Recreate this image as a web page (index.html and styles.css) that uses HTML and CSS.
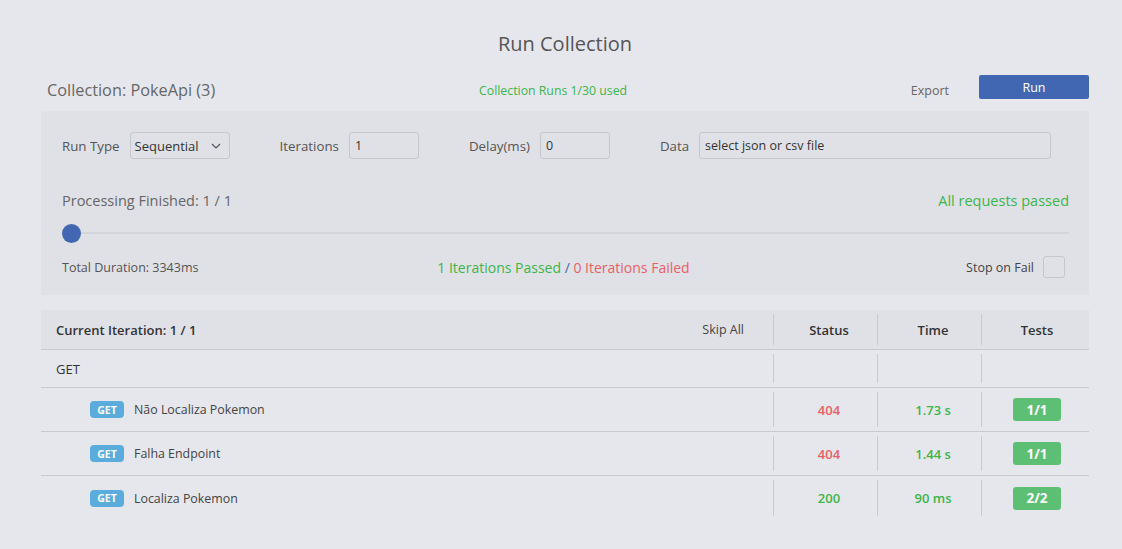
FILE: index.html
```html
<!DOCTYPE html>
<html lang="pt">
<head>
<meta charset="utf-8">
<title>Run Collection</title>
<link rel="stylesheet" href="styles.css">
</head>
<body>
<div class="page">
  <h1 class="title">Run Collection</h1>

  <div class="header">
    <div class="coll-name">Collection: PokeApi (3)</div>
    <div class="runs-used">Collection Runs 1/30 used</div>
    <div class="export">Export</div>
    <button class="run-btn">Run</button>
  </div>

  <div class="panel">
    <div class="controls">
      <span class="lbl">Run Type</span>
      <div class="select">
        <span>Sequential</span>
        <svg class="chev" width="10" height="6" viewBox="0 0 10 6"><path d="M1 1l4 4 4-4" fill="none" stroke="#555" stroke-width="1.2"/></svg>
      </div>
      <span class="lbl lbl-gap">Iterations</span>
      <input class="field small" type="text" value="1">
      <span class="lbl lbl-gap">Delay(ms)</span>
      <input class="field small" type="text" value="0">
      <span class="lbl lbl-gap">Data</span>
      <input class="field data" type="text" value="select json or csv file">
    </div>

    <div class="progress-row">
      <span class="processing">Processing Finished: 1 / 1</span>
      <span class="all-passed">All requests passed</span>
    </div>

    <div class="slider">
      <div class="thumb"></div>
    </div>

    <div class="summary-row">
      <span class="duration">Total Duration: 3343ms</span>
      <span class="iter-summary"><span class="green">1 Iterations Passed</span> <span class="slash">/</span> <span class="red">0 Iterations Failed</span></span>
      <span class="stop">Stop on Fail <span class="checkbox"></span></span>
    </div>
  </div>

  <div class="table">
    <div class="row head">
      <div class="cell first"><span class="bold">Current Iteration: 1 / 1</span><span class="skip">Skip All</span></div>
      <div class="cell col">Status</div>
      <div class="cell col">Time</div>
      <div class="cell col tests">Tests</div>
    </div>
    <div class="row group">
      <div class="cell first">GET</div>
      <div class="cell col"></div>
      <div class="cell col"></div>
      <div class="cell col tests"></div>
    </div>
    <div class="row req">
      <div class="cell first req-name"><span class="badge-get">GET</span>Não Localiza Pokemon</div>
      <div class="cell col red">404</div>
      <div class="cell col green">1.73 s</div>
      <div class="cell col tests"><span class="badge-test">1/1</span></div>
    </div>
    <div class="row req">
      <div class="cell first req-name"><span class="badge-get">GET</span>Falha Endpoint</div>
      <div class="cell col red">404</div>
      <div class="cell col green">1.44 s</div>
      <div class="cell col tests"><span class="badge-test">1/1</span></div>
    </div>
    <div class="row req last">
      <div class="cell first req-name"><span class="badge-get">GET</span>Localiza Pokemon</div>
      <div class="cell col green">200</div>
      <div class="cell col green">90 ms</div>
      <div class="cell col tests"><span class="badge-test">2/2</span></div>
    </div>
  </div>
</div>
</body>
</html>
```
FILE: styles.css
```css
* { box-sizing: border-box; }

body {
  margin: 0;
  background: #e6e7ec;
  font-family: "Open Sans", "Noto Sans", sans-serif;
  color: #444;
}

.page {
  width: 1048px;
  margin-left: 41px;
}

.title {
  margin: 0;
  padding-top: 30px;
  height: 75px;
  text-align: center;
  font-weight: 400;
  font-size: 20px;
  color: #555;
}

.header {
  display: flex;
  align-items: center;
  height: 30px;
  margin-bottom: 6px;
  padding-left: 6px;
}

.coll-name {
  width: 432px;
  font-size: 16.3px;
  color: #666;
}

.runs-used {
  font-size: 12.3px;
  color: #3db54a;
}

.export {
  margin-left: auto;
  font-size: 12.5px;
  color: #666;
  margin-right: 30px;
}

.run-btn {
  align-self: flex-start;
  width: 110px;
  height: 24px;
  border: none;
  border-radius: 2px;
  background: #4267b2;
  color: #fff;
  font-family: inherit;
  font-size: 12.5px;
  padding: 0;
}

.panel {
  background: #e0e1e6;
  padding: 21px 20px 0 21px;
  height: 184px;
}

.controls {
  display: flex;
  align-items: center;
  height: 27px;
}

.lbl {
  font-size: 13.3px;
  color: #555;
  margin-right: 10px;
}

.lbl-gap { margin-left: 50px; }

.select {
  width: 100px;
  height: 27px;
  border: 1px solid #c6c7cc;
  border-radius: 3px;
  display: flex;
  align-items: center;
  justify-content: space-between;
  padding: 0 8px 0 4px;
  font-size: 13px;
  color: #333;
}

.field {
  height: 27px;
  border: 1px solid #c6c7cc;
  border-radius: 3px;
  background: transparent;
  font-family: inherit;
  font-size: 12.5px;
  color: #333;
  padding: 0 5px;
  outline: none;
}

.field.small { width: 70px; }
.field.data { width: 352px; }

.progress-row {
  display: flex;
  justify-content: space-between;
  align-items: center;
  margin-top: 28px;
  height: 26px;
  font-size: 14.5px;
}

.processing { color: #666; }
.all-passed { color: #3db54a; }

.slider {
  margin-top: 19px;
  height: 2px;
  background: #d4d5da;
  display: flex;
  align-items: center;
}

.thumb {
  width: 19px;
  height: 19px;
  border-radius: 50%;
  background: #4267b2;
  flex: none;
}

.summary-row {
  display: flex;
  justify-content: space-between;
  align-items: center;
  margin-top: 21px;
  height: 24px;
  padding-right: 4px;
}

.duration {
  font-size: 12.5px;
  color: #555;
  width: 290px;
}

.iter-summary { font-size: 14px; }
.slash { color: #4267b2; }

.stop {
  font-size: 12.5px;
  color: #444;
  display: flex;
  align-items: center;
  gap: 9px;
  width: 290px;
  justify-content: flex-end;
}

.checkbox {
  width: 22px;
  height: 22px;
  border: 1px solid #c6c7cc;
  border-radius: 3px;
}

.green { color: #3db54a; }
.red { color: #e95f66; }

.table {
  margin-top: 15px;
}

.row {
  display: grid;
  grid-template-columns: 732px 104px 104px 108px;
  border-bottom: 1px solid #c9cace;
  padding: 4px 0;
}

.row.last { border-bottom: none; }

.row.head {
  background: #e0e1e6;
  height: 40px;
}

.row.group { height: 38px; }
.row.req { height: 44px; }

.cell {
  display: flex;
  align-items: center;
  font-size: 13px;
}

.cell.first {
  padding-left: 15px;
  color: #333;
}

.head .first {
  justify-content: space-between;
  padding-right: 29px;
}

.bold {
  font-weight: 600;
  font-size: 13px;
  color: #333;
}

.skip {
  font-size: 12.5px;
  color: #444;
}

.cell.col {
  border-left: 1px solid #c9cace;
  justify-content: center;
  font-weight: 600;
  padding-left: 7px;
}

.cell.col.tests { padding-left: 3px; }

.head .col { color: #333; }

.req-name {
  padding-left: 49px !important;
  color: #444 !important;
  font-size: 12.4px !important;
}

.badge-get {
  width: 34px;
  height: 17px;
  border-radius: 4px;
  background: #5aacdd;
  color: #fff;
  font-size: 10.5px;
  font-weight: 700;
  display: inline-flex;
  align-items: center;
  justify-content: center;
  margin-right: 10px;
}

.badge-test {
  width: 48px;
  height: 23px;
  border-radius: 3px;
  background: #5dbf74;
  color: #fff;
  font-size: 13.5px;
  font-weight: 700;
  display: inline-flex;
  align-items: center;
  justify-content: center;
}
```
